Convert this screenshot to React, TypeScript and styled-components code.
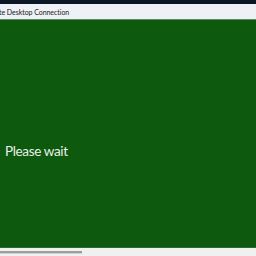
import React from "react";
import styled, { createGlobalStyle } from "styled-components";

const Global = createGlobalStyle`
  html, body { margin: 0; padding: 0; width: 256px; height: 256px; overflow: hidden; background: #f0f0f0; }
  #root { width: 256px; height: 256px; }
`;

const Window = styled.div`
  width: 256px;
  height: 256px;
  display: flex;
  flex-direction: column;
  font-family: Lato, "Noto Sans", "DejaVu Sans", sans-serif;
`;

const TopStrip = styled.div`
  height: 4px;
  background: #0b1726;
  flex: none;
`;

const TitleBar = styled.div`
  height: 15px;
  background: #eef1f5;
  border-bottom: 1px solid #5f8a5f;
  display: flex;
  align-items: center;
  flex: none;
  overflow: hidden;
`;

const Title = styled.span`
  font-size: 7px;
  color: #1a1a1a;
  white-space: nowrap;
  margin-left: -1px;
  letter-spacing: -0.05px;
`;

const Session = styled.div`
  flex: 1;
  background: #0d590e;
  display: flex;
  align-items: flex-start;
  padding-top: 121px;
  border-bottom: 1px solid #2f6a30;
`;

const Message = styled.span`
  color: #e9f0e9;
  font-size: 13.5px;
  line-height: 20px;
  letter-spacing: -0.35px;
  margin-left: 5px;
`;

const ScrollTrack = styled.div`
  height: 8px;
  background: #f0f0f0;
  flex: none;
  display: flex;
  align-items: center;
`;

const Thumb = styled.div`
  width: 82px;
  height: 2px;
  background: #9d9d9d;
  border-bottom: 1px solid #cfcfcf;
  margin-top: 1px;
`;

export default function App() {
  return (
    <>
      <Global />
      <Window>
        <TopStrip />
        <TitleBar>
          <Title>te Desktop Connection</Title>
        </TitleBar>
        <Session>
          <Message>Please wait</Message>
        </Session>
        <ScrollTrack>
          <Thumb />
        </ScrollTrack>
      </Window>
    </>
  );
}
